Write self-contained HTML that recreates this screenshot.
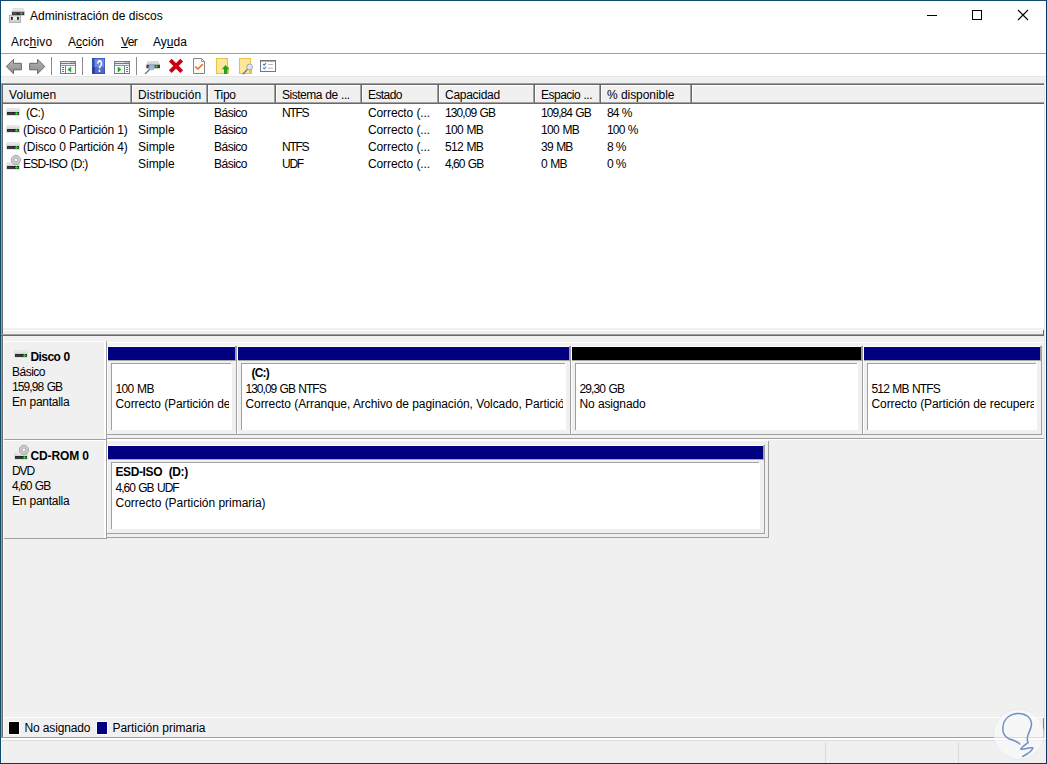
<!DOCTYPE html><html><head><meta charset='utf-8'><title>Administración de discos</title><style>
html,body{margin:0;padding:0}
body{width:1047px;height:764px;overflow:hidden;position:relative;background:#f0f0f0;font-family:"Liberation Sans",sans-serif;font-size:12px;color:#000}
.a{position:absolute}
.t{position:absolute;white-space:nowrap;line-height:14px;height:14px}
.b{font-weight:bold}
u{text-decoration:underline;text-underline-offset:1px}
</style></head><body>
<div class='a' style='left:1px;top:1px;width:1045px;height:75px;background:#fff;'></div>
<div class='t ' style='left:30px;top:9px;'>Administración de discos</div>
<div class='t ' style='left:11px;top:35px;letter-spacing:0.181px;word-spacing:-0.181px;'>Arc<u>h</u>ivo</div>
<div class='t ' style='left:68px;top:35px;'>A<u>c</u>ción</div>
<div class='t ' style='left:121px;top:35px;letter-spacing:-0.605px;word-spacing:0.605px;'><u>V</u>er</div>
<div class='t ' style='left:153px;top:35px;'>Ay<u>u</u>da</div>
<div class='a' style='left:1px;top:53px;width:1045px;height:1px;background:#a0a0a0;'></div>
<div class='a' style='left:51px;top:57px;width:1px;height:18px;background:#8a8a8a;'></div>
<div class='a' style='left:82px;top:57px;width:1px;height:18px;background:#8a8a8a;'></div>
<div class='a' style='left:136px;top:57px;width:1px;height:18px;background:#8a8a8a;'></div>
<div class='a' style='left:1px;top:76px;width:1045px;height:1px;background:#e6e6e6;'></div>
<svg class='a' style='left:900px;top:0' width='147' height='31' viewBox='0 0 147 31'><g stroke='#000' stroke-width='1' fill='none' shape-rendering='crispEdges'><path d='M27 15.5H37'/><rect x='72.5' y='10.5' width='9' height='9'/></g><path d='M118 10L128 20M128 10L118 20' stroke='#000' stroke-width='1.1' fill='none'/></svg>
<div class='a' style='left:1px;top:83px;width:1045px;height:1px;background:#a0a0a0;'></div>
<div class='a' style='left:1px;top:84px;width:1045px;height:1px;background:#696969;'></div>
<div class='a' style='left:1px;top:83px;width:1px;height:655px;background:#a0a0a0;'></div>
<div class='a' style='left:2px;top:84px;width:1px;height:654px;background:#696969;'></div>
<div class='a' style='left:3px;top:85px;width:1041px;height:243px;background:#fff;'></div>
<div class='a' style='left:3px;top:86px;width:1041px;height:16px;background:#f0f0f0;'></div>
<div class='a' style='left:3px;top:102px;width:1041px;height:1px;background:#a0a0a0;'></div>
<div class='a' style='left:3px;top:103px;width:1041px;height:1px;background:#696969;'></div>
<div class='t ' style='left:9px;top:88px;letter-spacing:0.085px;word-spacing:-0.085px;'>Volumen</div>
<div class='a' style='left:130px;top:85px;width:1px;height:18px;background:#a0a0a0;'></div>
<div class='a' style='left:131px;top:85px;width:1px;height:18px;background:#696969;'></div>
<div class='a' style='left:132px;top:85px;width:1px;height:17px;background:#fff;'></div>
<div class='t ' style='left:138px;top:88px;letter-spacing:0.041px;word-spacing:-0.041px;'>Distribución</div>
<div class='a' style='left:206px;top:85px;width:1px;height:18px;background:#a0a0a0;'></div>
<div class='a' style='left:207px;top:85px;width:1px;height:18px;background:#696969;'></div>
<div class='a' style='left:208px;top:85px;width:1px;height:17px;background:#fff;'></div>
<div class='t ' style='left:214px;top:88px;letter-spacing:-0.327px;word-spacing:0.327px;'>Tipo</div>
<div class='a' style='left:274px;top:85px;width:1px;height:18px;background:#a0a0a0;'></div>
<div class='a' style='left:275px;top:85px;width:1px;height:18px;background:#696969;'></div>
<div class='a' style='left:276px;top:85px;width:1px;height:17px;background:#fff;'></div>
<div class='t ' style='left:282px;top:88px;letter-spacing:-0.473px;word-spacing:0.473px;'>Sistema de ...</div>
<div class='a' style='left:360px;top:85px;width:1px;height:18px;background:#a0a0a0;'></div>
<div class='a' style='left:361px;top:85px;width:1px;height:18px;background:#696969;'></div>
<div class='a' style='left:362px;top:85px;width:1px;height:17px;background:#fff;'></div>
<div class='t ' style='left:368px;top:88px;letter-spacing:-0.577px;word-spacing:0.577px;'>Estado</div>
<div class='a' style='left:437px;top:85px;width:1px;height:18px;background:#a0a0a0;'></div>
<div class='a' style='left:438px;top:85px;width:1px;height:18px;background:#696969;'></div>
<div class='a' style='left:439px;top:85px;width:1px;height:17px;background:#fff;'></div>
<div class='t ' style='left:445px;top:88px;letter-spacing:-0.286px;word-spacing:0.286px;'>Capacidad</div>
<div class='a' style='left:533px;top:85px;width:1px;height:18px;background:#a0a0a0;'></div>
<div class='a' style='left:534px;top:85px;width:1px;height:18px;background:#696969;'></div>
<div class='a' style='left:535px;top:85px;width:1px;height:17px;background:#fff;'></div>
<div class='t ' style='left:541px;top:88px;letter-spacing:-0.503px;word-spacing:0.503px;'>Espacio ...</div>
<div class='a' style='left:599px;top:85px;width:1px;height:18px;background:#a0a0a0;'></div>
<div class='a' style='left:600px;top:85px;width:1px;height:18px;background:#696969;'></div>
<div class='a' style='left:601px;top:85px;width:1px;height:17px;background:#fff;'></div>
<div class='t ' style='left:607px;top:88px;letter-spacing:-0.059px;word-spacing:0.059px;'>% disponible</div>
<div class='a' style='left:690px;top:85px;width:1px;height:18px;background:#a0a0a0;'></div>
<div class='a' style='left:691px;top:85px;width:1px;height:18px;background:#696969;'></div>
<div class='a' style='left:692px;top:85px;width:1px;height:17px;background:#fff;'></div>
<div class='t ' style='left:26px;top:106px;letter-spacing:-0.525px;word-spacing:0.525px;'>(C:)</div>
<div class='t ' style='left:138px;top:106px;letter-spacing:-0.015px;word-spacing:0.015px;'>Simple</div>
<div class='t ' style='left:214px;top:106px;letter-spacing:-0.505px;word-spacing:0.505px;'>Básico</div>
<div class='t ' style='left:282px;top:106px;letter-spacing:-1.236px;word-spacing:1.236px;'>NTFS</div>
<div class='t ' style='left:368px;top:106px;letter-spacing:-0.113px;word-spacing:0.113px;'>Correcto (...</div>
<div class='t ' style='left:445px;top:106px;letter-spacing:-0.922px;word-spacing:0.922px;'>130,09 GB</div>
<div class='t ' style='left:541px;top:106px;letter-spacing:-0.959px;word-spacing:0.959px;'>109,84 GB</div>
<div class='t ' style='left:607px;top:106px;letter-spacing:-1.020px;word-spacing:1.020px;'>84 %</div>
<div class='t ' style='left:23px;top:123px;letter-spacing:-0.197px;word-spacing:0.197px;'>(Disco 0 Partición 1)</div>
<div class='t ' style='left:138px;top:123px;letter-spacing:-0.015px;word-spacing:0.015px;'>Simple</div>
<div class='t ' style='left:214px;top:123px;letter-spacing:-0.505px;word-spacing:0.505px;'>Básico</div>
<div class='t ' style='left:368px;top:123px;letter-spacing:-0.113px;word-spacing:0.113px;'>Correcto (...</div>
<div class='t ' style='left:445px;top:123px;letter-spacing:-0.652px;word-spacing:0.652px;'>100 MB</div>
<div class='t ' style='left:541px;top:123px;letter-spacing:-0.652px;word-spacing:0.652px;'>100 MB</div>
<div class='t ' style='left:607px;top:123px;letter-spacing:-0.858px;word-spacing:0.858px;'>100 %</div>
<div class='t ' style='left:23px;top:140px;letter-spacing:-0.197px;word-spacing:0.197px;'>(Disco 0 Partición 4)</div>
<div class='t ' style='left:138px;top:140px;letter-spacing:-0.015px;word-spacing:0.015px;'>Simple</div>
<div class='t ' style='left:214px;top:140px;letter-spacing:-0.505px;word-spacing:0.505px;'>Básico</div>
<div class='t ' style='left:282px;top:140px;letter-spacing:-1.236px;word-spacing:1.236px;'>NTFS</div>
<div class='t ' style='left:368px;top:140px;letter-spacing:-0.113px;word-spacing:0.113px;'>Correcto (...</div>
<div class='t ' style='left:445px;top:140px;letter-spacing:-0.652px;word-spacing:0.652px;'>512 MB</div>
<div class='t ' style='left:541px;top:140px;letter-spacing:-0.772px;word-spacing:0.772px;'>39 MB</div>
<div class='t ' style='left:607px;top:140px;letter-spacing:-1.144px;word-spacing:1.144px;'>8 %</div>
<div class='t ' style='left:23px;top:157px;letter-spacing:-0.743px;word-spacing:0.743px;'>ESD-ISO (D:)</div>
<div class='t ' style='left:138px;top:157px;letter-spacing:-0.015px;word-spacing:0.015px;'>Simple</div>
<div class='t ' style='left:214px;top:157px;letter-spacing:-0.505px;word-spacing:0.505px;'>Básico</div>
<div class='t ' style='left:282px;top:157px;letter-spacing:-1.291px;word-spacing:1.291px;'>UDF</div>
<div class='t ' style='left:368px;top:157px;letter-spacing:-0.113px;word-spacing:0.113px;'>Correcto (...</div>
<div class='t ' style='left:445px;top:157px;letter-spacing:-0.972px;word-spacing:0.972px;'>4,60 GB</div>
<div class='t ' style='left:541px;top:157px;letter-spacing:-0.739px;word-spacing:0.739px;'>0 MB</div>
<div class='t ' style='left:607px;top:157px;letter-spacing:-1.144px;word-spacing:1.144px;'>0 %</div>
<div class='a' style='left:3px;top:328px;width:1041px;height:2px;background:#f0f0f0;'></div>
<div class='a' style='left:3px;top:330px;width:1041px;height:1px;background:#fff;'></div>
<div class='a' style='left:3px;top:331px;width:1041px;height:3px;background:#f0f0f0;'></div>
<div class='a' style='left:1px;top:334px;width:1043px;height:1px;background:#a0a0a0;'></div>
<div class='a' style='left:1px;top:335px;width:1043px;height:1px;background:#696969;'></div>
<div class='a' style='left:1043px;top:330px;width:1px;height:6px;background:#696969;'></div>
<div class='a' style='left:107px;top:342px;width:937px;height:1px;background:#fff;'></div>
<div class='a' style='left:4px;top:341px;width:102px;height:1px;background:#fff;'></div>
<div class='a' style='left:3px;top:341px;width:1px;height:98px;background:#fff;'></div>
<div class='a' style='left:104px;top:341px;width:2px;height:98px;background:#fff;'></div>
<div class='a' style='left:106px;top:341px;width:1px;height:98px;background:#a0a0a0;'></div>
<div class='a' style='left:3px;top:439px;width:104px;height:1px;background:#a0a0a0;'></div>
<div class='t b' style='left:30.5px;top:350px;letter-spacing:-0.581px;word-spacing:0.581px;'>Disco 0</div>
<div class='t ' style='left:12px;top:365px;letter-spacing:-0.505px;word-spacing:0.505px;'>Básico</div>
<div class='t ' style='left:12px;top:380px;letter-spacing:-0.897px;word-spacing:0.897px;'>159,98 GB</div>
<div class='t ' style='left:12px;top:395px;letter-spacing:-0.265px;word-spacing:0.265px;'>En pantalla</div>
<div class='a' style='left:107px;top:346px;width:129px;height:1px;background:#fff;'></div>
<div class='a' style='left:107px;top:346px;width:1px;height:88px;background:#fff;'></div>
<div class='a' style='left:108px;top:347px;width:127px;height:13px;background:#000080;'></div>
<div class='a' style='left:235px;top:346px;width:1px;height:14px;background:#a0a0a0;'></div>
<div class='a' style='left:108px;top:360px;width:128px;height:1px;background:#a8a8a0;'></div>
<div class='a' style='left:236px;top:346px;width:1px;height:89px;background:#a0a0a0;'></div>
<div class='a' style='left:107px;top:434px;width:130px;height:1px;background:#a0a0a0;'></div>
<div class='a' style='left:111px;top:363px;width:121px;height:67px;background:#fff;'></div>
<div class='a' style='left:111px;top:363px;width:120px;height:1px;background:#a0a0a0;'></div>
<div class='a' style='left:111px;top:363px;width:1px;height:67px;background:#a0a0a0;'></div>
<div class='a' style='left:112px;top:364px;width:117px;height:66px;overflow:hidden'>
<div class='t ' style='left:3.5px;top:18px;letter-spacing:-0.612px;word-spacing:0.612px;'>100 MB</div>
<div class='t ' style='left:3.5px;top:33px;letter-spacing:-0.090px;word-spacing:0.090px;'>Correcto (Partición de recuperación)</div>
</div>
<div class='a' style='left:237px;top:346px;width:333px;height:1px;background:#fff;'></div>
<div class='a' style='left:237px;top:346px;width:1px;height:88px;background:#fff;'></div>
<div class='a' style='left:238px;top:347px;width:331px;height:13px;background:#000080;'></div>
<div class='a' style='left:569px;top:346px;width:1px;height:14px;background:#a0a0a0;'></div>
<div class='a' style='left:238px;top:360px;width:332px;height:1px;background:#a8a8a0;'></div>
<div class='a' style='left:570px;top:346px;width:1px;height:89px;background:#a0a0a0;'></div>
<div class='a' style='left:237px;top:434px;width:334px;height:1px;background:#a0a0a0;'></div>
<div class='a' style='left:241px;top:363px;width:325px;height:67px;background:#fff;'></div>
<div class='a' style='left:241px;top:363px;width:324px;height:1px;background:#a0a0a0;'></div>
<div class='a' style='left:241px;top:363px;width:1px;height:67px;background:#a0a0a0;'></div>
<div class='a' style='left:242px;top:364px;width:321px;height:66px;overflow:hidden'>
<div class='t b' style='left:9.5px;top:2px;letter-spacing:-0.839px;word-spacing:0.839px;'>(C:)</div>
<div class='t ' style='left:3.5px;top:18px;letter-spacing:-0.987px;word-spacing:0.987px;'>130,09 GB NTFS</div>
<div class='t ' style='left:3.5px;top:33px;letter-spacing:-0.073px;word-spacing:0.073px;'>Correcto (Arranque, Archivo de paginación, Volcado, Partición primaria)</div>
</div>
<div class='a' style='left:571px;top:346px;width:291px;height:1px;background:#fff;'></div>
<div class='a' style='left:571px;top:346px;width:1px;height:88px;background:#fff;'></div>
<div class='a' style='left:572px;top:347px;width:289px;height:13px;background:#000;'></div>
<div class='a' style='left:861px;top:346px;width:1px;height:14px;background:#a0a0a0;'></div>
<div class='a' style='left:572px;top:360px;width:290px;height:1px;background:#a8a8a0;'></div>
<div class='a' style='left:862px;top:346px;width:1px;height:89px;background:#a0a0a0;'></div>
<div class='a' style='left:571px;top:434px;width:292px;height:1px;background:#a0a0a0;'></div>
<div class='a' style='left:575px;top:363px;width:283px;height:67px;background:#fff;'></div>
<div class='a' style='left:575px;top:363px;width:282px;height:1px;background:#a0a0a0;'></div>
<div class='a' style='left:575px;top:363px;width:1px;height:67px;background:#a0a0a0;'></div>
<div class='a' style='left:576px;top:364px;width:279px;height:66px;overflow:hidden'>
<div class='t ' style='left:3.5px;top:18px;letter-spacing:-0.872px;word-spacing:0.872px;'>29,30 GB</div>
<div class='t ' style='left:3.5px;top:33px;letter-spacing:-0.139px;word-spacing:0.139px;'>No asignado</div>
</div>
<div class='a' style='left:863px;top:346px;width:178px;height:1px;background:#fff;'></div>
<div class='a' style='left:863px;top:346px;width:1px;height:88px;background:#fff;'></div>
<div class='a' style='left:864px;top:347px;width:176px;height:13px;background:#000080;'></div>
<div class='a' style='left:1040px;top:346px;width:1px;height:14px;background:#a0a0a0;'></div>
<div class='a' style='left:864px;top:360px;width:177px;height:1px;background:#a8a8a0;'></div>
<div class='a' style='left:1041px;top:346px;width:1px;height:89px;background:#a0a0a0;'></div>
<div class='a' style='left:863px;top:434px;width:179px;height:1px;background:#a0a0a0;'></div>
<div class='a' style='left:867px;top:363px;width:170px;height:67px;background:#fff;'></div>
<div class='a' style='left:867px;top:363px;width:169px;height:1px;background:#a0a0a0;'></div>
<div class='a' style='left:867px;top:363px;width:1px;height:67px;background:#a0a0a0;'></div>
<div class='a' style='left:868px;top:364px;width:166px;height:66px;overflow:hidden'>
<div class='t ' style='left:3.5px;top:18px;letter-spacing:-0.859px;word-spacing:0.859px;'>512 MB NTFS</div>
<div class='t ' style='left:3.5px;top:33px;letter-spacing:-0.090px;word-spacing:0.090px;'>Correcto (Partición de recuperación)</div>
</div>
<div class='a' style='left:107px;top:438px;width:937px;height:1px;background:#a0a0a0;'></div>
<div class='a' style='left:107px;top:439px;width:937px;height:1px;background:#fff;'></div>
<div class='a' style='left:4px;top:440px;width:102px;height:1px;background:#fff;'></div>
<div class='a' style='left:3px;top:440px;width:1px;height:98px;background:#fff;'></div>
<div class='a' style='left:104px;top:440px;width:2px;height:98px;background:#fff;'></div>
<div class='a' style='left:106px;top:440px;width:1px;height:98px;background:#a0a0a0;'></div>
<div class='a' style='left:3px;top:538px;width:104px;height:1px;background:#a0a0a0;'></div>
<div class='t b' style='left:30.5px;top:449px;letter-spacing:-0.135px;word-spacing:0.135px;'>CD-ROM 0</div>
<div class='t ' style='left:12px;top:464px;letter-spacing:-1.081px;word-spacing:1.081px;'>DVD</div>
<div class='t ' style='left:12px;top:479px;letter-spacing:-0.955px;word-spacing:0.955px;'>4,60 GB</div>
<div class='t ' style='left:12px;top:494px;letter-spacing:-0.265px;word-spacing:0.265px;'>En pantalla</div>
<div class='a' style='left:107px;top:445px;width:657px;height:1px;background:#fff;'></div>
<div class='a' style='left:107px;top:445px;width:1px;height:88px;background:#fff;'></div>
<div class='a' style='left:108px;top:446px;width:655px;height:13px;background:#000080;'></div>
<div class='a' style='left:763px;top:445px;width:1px;height:14px;background:#a0a0a0;'></div>
<div class='a' style='left:108px;top:459px;width:656px;height:1px;background:#a8a8a0;'></div>
<div class='a' style='left:764px;top:445px;width:1px;height:89px;background:#a0a0a0;'></div>
<div class='a' style='left:107px;top:533px;width:658px;height:1px;background:#a0a0a0;'></div>
<div class='a' style='left:111px;top:462px;width:649px;height:67px;background:#fff;'></div>
<div class='a' style='left:111px;top:462px;width:648px;height:1px;background:#a0a0a0;'></div>
<div class='a' style='left:111px;top:462px;width:1px;height:67px;background:#a0a0a0;'></div>
<div class='a' style='left:112px;top:463px;width:645px;height:66px;overflow:hidden'>
<div class='t b' style='left:3.5px;top:2px;letter-spacing:-0.397px;word-spacing:0.397px;'>ESD-ISO&nbsp; (D:)</div>
<div class='t ' style='left:3.5px;top:18px;letter-spacing:-0.981px;word-spacing:0.981px;'>4,60 GB UDF</div>
<div class='t ' style='left:3.5px;top:33px;letter-spacing:-0.026px;word-spacing:0.026px;'>Correcto (Partición primaria)</div>
</div>
<div class='a' style='left:768px;top:441px;width:1px;height:97px;background:#a0a0a0;'></div>
<div class='a' style='left:107px;top:537px;width:662px;height:1px;background:#a0a0a0;'></div>
<div class='a' style='left:107px;top:440px;width:661px;height:1px;background:#fff;'></div>
<div class='a' style='left:3px;top:336px;width:1px;height:401px;background:#fff;'></div>
<div class='a' style='left:3px;top:717px;width:1041px;height:1px;background:#fff;'></div>
<div class='a' style='left:8px;top:721px;width:12px;height:14px;background:#fff;'></div>
<div class='a' style='left:96px;top:721px;width:12px;height:14px;background:#fff;'></div>
<div class='a' style='left:9px;top:722px;width:10px;height:12px;background:#000;'></div>
<div class='t ' style='left:24.5px;top:721px;letter-spacing:-0.159px;word-spacing:0.159px;'>No asignado</div>
<div class='a' style='left:97px;top:722px;width:10px;height:12px;background:#000080;'></div>
<div class='t ' style='left:112.4px;top:721px;letter-spacing:-0.016px;word-spacing:0.016px;'>Partición primaria</div>
<div class='a' style='left:1px;top:737px;width:1043px;height:1px;background:#a0a0a0;'></div>
<div class='a' style='left:1043px;top:718px;width:1px;height:20px;background:#808080;'></div>
<div class='a' style='left:1px;top:738px;width:1045px;height:2px;background:#fff;'></div>
<div class='a' style='left:1px;top:740px;width:1045px;height:1px;background:#dcdcdc;'></div>
<div class='a' style='left:1px;top:741px;width:1045px;height:22px;background:#f0f0f0;'></div>
<div class='a' style='left:1px;top:738px;width:1px;height:25px;background:#f8f6f4;'></div>
<div class='a' style='left:825px;top:742px;width:1px;height:21px;background:#dadada;'></div>
<div class='a' style='left:958px;top:742px;width:1px;height:21px;background:#dadada;'></div>
<div class='a' style='left:1044px;top:83px;width:1px;height:655px;background:#e3e3e3;'></div>
<div class='a' style='left:1045px;top:83px;width:1px;height:655px;background:#fff;'></div>
<svg class='a' style='left:990px;top:706px' width='57' height='58' viewBox='990 706 57 58'><circle cx='1018.8' cy='734.3' r='25' fill='#fbfbfb' fill-opacity='0.62' stroke='#dde2ee' stroke-opacity='0.55' stroke-width='1'/><path d='M1019.8 744 C1016 740.5 1012 739.5 1008.5 738.7 C1004 736 1002.3 731 1003 726.5 C1004 718 1011 713.4 1018.5 713.4 C1026 713.4 1031.5 718 1031.5 724.3 C1031.5 729 1028 733 1027.5 737 C1027 740 1027.5 741.5 1028.1 742.7 C1025.5 744.5 1022 747 1020.8 749.2 C1024 750 1030 746.5 1032.9 748 C1032 751.5 1026.5 754.5 1022.7 756.5' fill='none' stroke='#6f90c8' stroke-width='1.5' stroke-linecap='round' stroke-linejoin='round'/></svg>
<div class='a' style='left:0px;top:0px;width:1047px;height:1px;background:#0e4a6b;'></div>
<div class='a' style='left:0px;top:0px;width:1px;height:764px;background:#0e4a6b;'></div>
<div class='a' style='left:1046px;top:0px;width:1px;height:764px;background:#0e3560;'></div>
<div class='a' style='left:0px;top:763px;width:1047px;height:1px;background:#0e3560;'></div>
<svg class='a' style='left:8px;top:7px' width='18' height='17' viewBox='8 7 18 17'><path d='M13 8 H23.1 L24.8 12 H11.4 Z' fill='#d9d9d9'/><path d='M13.4 8.4 H22.7 L23.8 11 H12.4 Z' fill='#e8e8e8'/><rect x='11.9' y='11.9' width='12.4' height='3.2' fill='#333'/><rect x='11.9' y='11.9' width='12.4' height='0.8' fill='#555'/><rect x='13' y='12.8' width='3.2' height='1.2' fill='#5a5a5a'/><circle cx='21.4' cy='13.5' r='1.1' fill='#2fe02f'/><rect x='11.6' y='15' width='13' height='0.8' fill='#d0d0d0'/><rect x='9.3' y='15.3' width='11.4' height='7.2' fill='#dcdcdc' stroke='#9a9a9a' stroke-width='0.7'/><rect x='10' y='20.3' width='10' height='1.8' fill='#cfcfcf'/><rect x='13' y='16.8' width='4' height='3' fill='#efefef'/><rect x='11' y='16.9' width='1.8' height='2.9' fill='#222'/><rect x='17' y='16.9' width='1.8' height='2.9' fill='#222'/></svg><svg class='a' style='left:0px;top:56px' width='290' height='20' viewBox='0 56 290 20'><defs><linearGradient id='ga' x1='0' y1='0' x2='0' y2='1'><stop offset='0' stop-color='#b4b4b4'/><stop offset='1' stop-color='#8e8e8e'/></linearGradient></defs><path d='M6.3 66.5 L13.5 59.3 V63.3 H21.4 V69.8 H13.5 V73.7 Z' fill='url(#ga)' stroke='#666' stroke-width='1' stroke-linejoin='round'/><path d='M44.8 66.5 L37.6 59.3 V63.3 H29.7 V69.8 H37.6 V73.7 Z' fill='url(#ga)' stroke='#666' stroke-width='1' stroke-linejoin='round'/><rect x='60.5' y='61.5' width='15' height='12' fill='#fff' stroke='#6e7e8e'/><rect x='61' y='62' width='14' height='2' fill='#687c92'/><rect x='61' y='62.1' width='9.8' height='0.9' fill='#f2f4f7'/><rect x='71.6' y='62.1' width='1' height='0.9' fill='#fff'/><rect x='73.5' y='62.1' width='1' height='0.9' fill='#fff'/><rect x='61' y='64' width='14' height='1' fill='#e8ecf0'/><rect x='61' y='65' width='14' height='1' fill='#8a9aaa'/><rect x='65' y='66' width='1' height='7' fill='#6e7e8e'/><rect x='67' y='67' width='7' height='5.5' fill='#f3f3f3'/><rect x='61.9' y='66.9' width='2.3' height='1' rx='0.5' fill='#3b78d8'/><rect x='61.9' y='68.9' width='2.3' height='1' rx='0.5' fill='#3b78d8'/><rect x='61.9' y='70.9' width='2.3' height='1' rx='0.5' fill='#3b78d8'/><path d='M67.8 69.6 L70.9 67.1 V72.1 Z' fill='#1aa51a' stroke='#1aa51a' stroke-width='0.4' stroke-linejoin='round'/><rect x='114.5' y='61.5' width='15' height='12' fill='#fff' stroke='#6e7e8e'/><rect x='115' y='62' width='14' height='2' fill='#687c92'/><rect x='115' y='62.1' width='9.8' height='0.9' fill='#f2f4f7'/><rect x='125.6' y='62.1' width='1' height='0.9' fill='#fff'/><rect x='127.5' y='62.1' width='1' height='0.9' fill='#fff'/><rect x='115' y='64' width='14' height='1' fill='#e8ecf0'/><rect x='115' y='65' width='14' height='1' fill='#8a9aaa'/><rect x='124' y='66' width='1' height='7' fill='#6e7e8e'/><rect x='116' y='67' width='7' height='5.5' fill='#f3f3f3'/><rect x='125.9' y='66.9' width='2.3' height='1' rx='0.5' fill='#3b78d8'/><rect x='125.9' y='68.9' width='2.3' height='1' rx='0.5' fill='#3b78d8'/><rect x='125.9' y='70.9' width='2.3' height='1' rx='0.5' fill='#3b78d8'/><path d='M121.1 69.5 L118 67 V72 Z' fill='#1aa51a' stroke='#1aa51a' stroke-width='0.4' stroke-linejoin='round'/><rect x='92' y='58' width='13' height='16' fill='#6f88e2'/><rect x='92' y='67' width='13' height='7' fill='#5068c6'/><rect x='92' y='58' width='2.6' height='16' fill='#3252b8'/><rect x='92' y='67' width='2.6' height='7' fill='#303a84'/><rect x='92.3' y='58.3' width='12.4' height='15.4' fill='none' stroke='#2a48b0' stroke-width='0.6'/><text x='100.1' y='72' font-family='Liberation Sans, sans-serif' font-weight='bold' font-size='15.8' fill='#30407a' fill-opacity='0.55' text-anchor='middle' textLength='6.2' lengthAdjust='spacingAndGlyphs'>?</text><text x='99.6' y='71.6' font-family='Liberation Sans, sans-serif' font-weight='bold' font-size='15.8' fill='#fff' text-anchor='middle' textLength='6.2' lengthAdjust='spacingAndGlyphs'>?</text><path d='M147.6 61 H158.6 L160 64.8 H146.4 Z' fill='#dadada'/><rect x='146.4' y='64.7' width='13.6' height='3.6' fill='#3a3a3a'/><rect x='146.2' y='68.3' width='14' height='0.8' fill='#d4d4d4'/><rect x='155.2' y='65.8' width='2.6' height='1.3' fill='#20d020'/><rect x='156' y='65.3' width='1' height='2.3' fill='#20d020'/><path d='M149.8 69.2 L145.4 73.6' stroke='#5a6a80' stroke-width='1.3' stroke-linecap='round'/><circle cx='151.7' cy='67' r='2.9' fill='#a9c0e6' fill-opacity='0.9' stroke='#8d9db8' stroke-width='0.8'/><path d='M170.3 60.2 L181.7 71.6 M181.7 60.2 L170.3 71.6' stroke='#c8000f' stroke-width='4' stroke-linecap='butt'/><path d='M193.5 58.5 H201.5 L204.5 61.5 V73.5 H193.5 Z' fill='#fafafa' stroke='#858585' stroke-width='1'/><path d='M201.5 58.5 V61.5 H204.5' fill='none' stroke='#858585' stroke-width='0.8'/><path d='M195.3 66.6 L197.9 69 L202.8 64.2' fill='none' stroke='#f0641e' stroke-width='1.5'/><rect x='216.5' y='58.5' width='11' height='15' fill='#fde79c' stroke='#eac243' stroke-width='1'/><rect x='228' y='66.5' width='1' height='7.5' fill='#eac243'/><path d='M225.5 65 L229.2 69.2 H227.2 V74 H224 V69.2 H221.9 Z' fill='#22a322'/><rect x='239.5' y='58.5' width='11' height='15' fill='#fde79c' stroke='#eac243' stroke-width='1'/><rect x='251' y='66.5' width='1' height='7.5' fill='#eac243'/><rect x='249' y='70' width='1' height='3.5' fill='#eac243'/><path d='M247.4 69.4 L243.3 73.7' stroke='#6a7078' stroke-width='1.3' stroke-linecap='round'/><circle cx='249.6' cy='67' r='2.9' fill='#d6e8f6' stroke='#9aa0a8' stroke-width='0.9'/><rect x='260.5' y='60.5' width='15' height='11' fill='#fff' stroke='#777' stroke-width='1'/><rect x='260' y='60' width='16' height='1.6' fill='#777'/><path d='M263 64 L264.2 65.2 L266 63.2 M263 67.6 L264.2 68.8 L266 66.8' fill='none' stroke='#2f7fe0' stroke-width='1.1'/><path d='M268 64.5 H273 M268 68.2 H273' stroke='#b8b8b8' stroke-width='1'/></svg><svg class='a' style='left:5px;top:107px' width='16' height='11' viewBox='5 107 16 11'><path d='M7.2 108 H18.9 L19.9 110.2 V115.7 H6.2 V110.2 Z' fill='#d9d9dc'/><path d='M7.7 108.3 H18.4 L19.1 110.3 H7 Z' fill='#e9e9ea'/><rect x='7' y='112' width='11.9' height='2.9' fill='#272727'/><rect x='7.6' y='113.1' width='5.5' height='0.7' fill='#4a4a4a'/><rect x='15' y='112.95' width='3' height='1.1' fill='#22d822'/><rect x='15.95' y='112.1' width='1.1' height='2.7' fill='#22d822'/></svg><svg class='a' style='left:5px;top:124px' width='16' height='11' viewBox='5 124 16 11'><path d='M7.2 125 H18.9 L19.9 127.2 V132.7 H6.2 V127.2 Z' fill='#d9d9dc'/><path d='M7.7 125.3 H18.4 L19.1 127.3 H7 Z' fill='#e9e9ea'/><rect x='7' y='129' width='11.9' height='2.9' fill='#272727'/><rect x='7.6' y='130.1' width='5.5' height='0.7' fill='#4a4a4a'/><rect x='15' y='129.95' width='3' height='1.1' fill='#22d822'/><rect x='15.95' y='129.1' width='1.1' height='2.7' fill='#22d822'/></svg><svg class='a' style='left:5px;top:141px' width='16' height='11' viewBox='5 141 16 11'><path d='M7.2 142 H18.9 L19.9 144.2 V149.7 H6.2 V144.2 Z' fill='#d9d9dc'/><path d='M7.7 142.3 H18.4 L19.1 144.3 H7 Z' fill='#e9e9ea'/><rect x='7' y='146' width='11.9' height='2.9' fill='#272727'/><rect x='7.6' y='147.1' width='5.5' height='0.7' fill='#4a4a4a'/><rect x='15' y='146.95' width='3' height='1.1' fill='#22d822'/><rect x='15.95' y='146.1' width='1.1' height='2.7' fill='#22d822'/></svg><svg class='a' style='left:5px;top:154px' width='17' height='17' viewBox='5 154 17 17'><path d='M7.2 162 H18.9 L19.9 164.2 V169.7 H6.2 V164.2 Z' fill='#d9d9dc'/><path d='M7.7 162.3 H18.4 L19.1 164.3 H7 Z' fill='#e9e9ea'/><rect x='7' y='166' width='11.9' height='2.9' fill='#272727'/><rect x='7.6' y='167.1' width='5.5' height='0.7' fill='#4a4a4a'/><rect x='15' y='166.95' width='3' height='1.1' fill='#22d822'/><rect x='15.95' y='166.1' width='1.1' height='2.7' fill='#22d822'/><circle cx='15.9' cy='159.9' r='4.6' fill='#cfd0d2' stroke='#9c9c9c' stroke-width='0.9'/><circle cx='15.9' cy='159.9' r='2.1' fill='#e2e2e2' stroke='#9e9e9e' stroke-width='0.8'/><circle cx='15.9' cy='159.9' r='1' fill='#fff'/></svg><svg class='a' style='left:13px;top:349px' width='16' height='11' viewBox='13 349 16 11'><path d='M15.2 350 H26.9 L27.9 352.2 V357.7 H14.2 V352.2 Z' fill='#d9d9dc'/><path d='M15.7 350.3 H26.4 L27.1 352.3 H15 Z' fill='#e9e9ea'/><rect x='15' y='354' width='11.9' height='2.9' fill='#272727'/><rect x='15.6' y='355.1' width='5.5' height='0.7' fill='#4a4a4a'/><rect x='23' y='354.95' width='3' height='1.1' fill='#22d822'/><rect x='23.95' y='354.1' width='1.1' height='2.7' fill='#22d822'/></svg><svg class='a' style='left:13px;top:444px' width='17' height='17' viewBox='13 444 17 17'><path d='M15.2 452 H26.9 L27.9 454.2 V459.7 H14.2 V454.2 Z' fill='#d9d9dc'/><path d='M15.7 452.3 H26.4 L27.1 454.3 H15 Z' fill='#e9e9ea'/><rect x='15' y='456' width='11.9' height='2.9' fill='#272727'/><rect x='15.6' y='457.1' width='5.5' height='0.7' fill='#4a4a4a'/><rect x='23' y='456.95' width='3' height='1.1' fill='#22d822'/><rect x='23.95' y='456.1' width='1.1' height='2.7' fill='#22d822'/><circle cx='23.9' cy='449.9' r='4.6' fill='#cfd0d2' stroke='#9c9c9c' stroke-width='0.9'/><circle cx='23.9' cy='449.9' r='2.1' fill='#e2e2e2' stroke='#9e9e9e' stroke-width='0.8'/><circle cx='23.9' cy='449.9' r='1' fill='#fff'/></svg>
</body></html>
